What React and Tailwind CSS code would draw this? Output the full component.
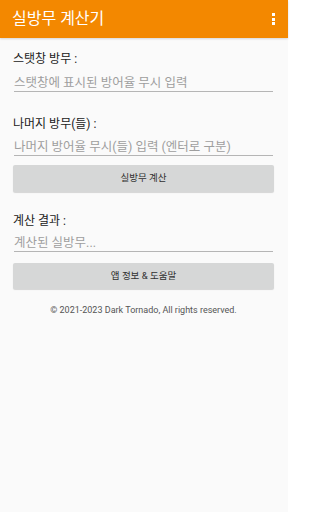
import React from "react";

const font = { fontFamily: "Roboto, 'Noto Sans CJK KR', sans-serif" };

const Field = ({ label, placeholder, top, inputH = "h-[22px] pt-[4px]" }) => (
  <div className={top}>
    <p className="text-[12px] leading-[16px] text-[#212121]">{label}</p>
    <div className={`mx-[1px] mt-[3px] ${inputH} border-b border-[#b5b5b5] text-[12.5px] leading-[17px] text-[#9e9e9e]`}>
      {placeholder}
    </div>
  </div>
);

const GrayButton = ({ children, top }) => (
  <button className={`w-full ${top} rounded-[2px] bg-[#d6d7d7] text-[9.5px] text-[#303030] shadow-[0_1px_1px_rgba(0,0,0,0.15)]`}>
    {children}
  </button>
);

const App = () => {
  return (
    <div className="w-[288px] h-[512px] bg-[#fafafa] flex flex-col" style={font}>
      <header className="h-[38px] bg-[#f38800] flex items-center justify-between pl-3 pr-[13px] shadow-[0_1px_2px_rgba(0,0,0,0.15)]">
        <h1 className="text-[16px] text-white">실방무 계산기</h1>
        <div className="flex flex-col gap-[1.5px]">
          <span className="w-[3px] h-[3px] bg-white" />
          <span className="w-[3px] h-[3px] bg-white" />
          <span className="w-[3px] h-[3px] bg-white" />
        </div>
      </header>
      <main className="flex flex-col pl-[13px] pr-[14px]">
        <Field label="스탯창 방무 :" placeholder="스탯창에 표시된 방어율 무시 입력" top="mt-[13px]" />
        <Field
          label="나머지 방무(들) :"
          placeholder="나머지 방어율 무시(들) 입력 (엔터로 구분)"
          top="mt-[24px]"
          inputH="h-[21px] pt-[3px]"
        />
        <GrayButton top="mt-[9px] h-[27px]">실방무 계산</GrayButton>
        <Field
          label="계산 결과 :"
          placeholder="계산된 실방무..."
          top="mt-[21px]"
          inputH="h-[20px] pt-[2px]"
        />
        <GrayButton top="mt-[11px] h-[26px]">앱 정보 &amp; 도움말</GrayButton>
        <p className="mt-[15px] text-center text-[9px] text-[#555555]">
          © 2021-2023 Dark Tornado, All rights reserved.
        </p>
      </main>
    </div>
  );
};

export default App;
